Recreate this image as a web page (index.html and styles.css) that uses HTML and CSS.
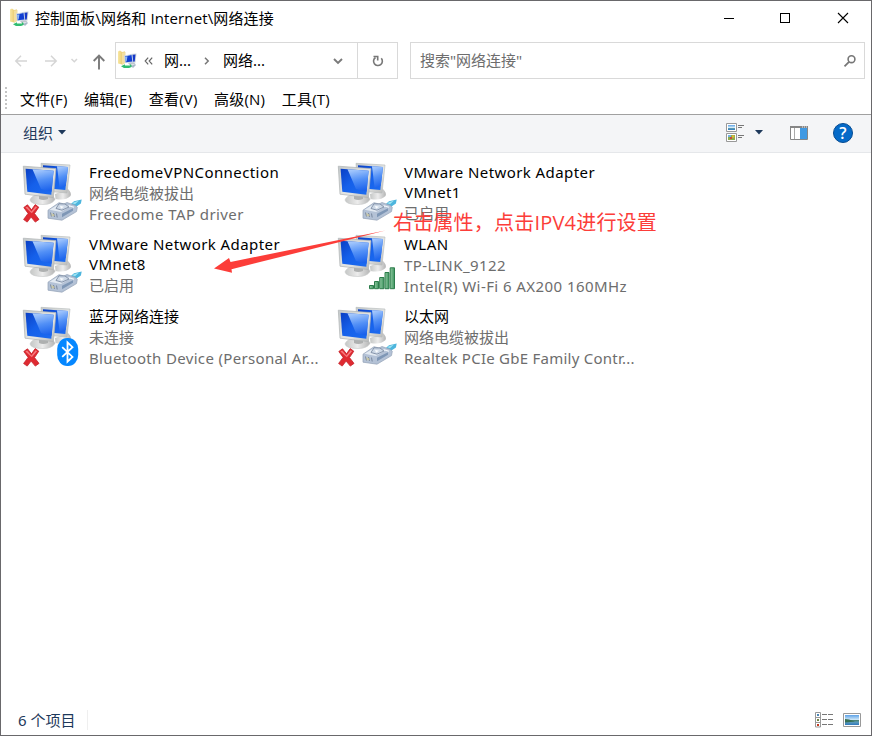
FILE: index.html
```html
<!DOCTYPE html>
<html lang="zh-CN">
<head>
<meta charset="utf-8">
<title>网络连接</title>
<link rel="stylesheet" href="styles.css">
</head>
<body>
<svg class="defs" width="0" height="0" aria-hidden="true">
  <defs>
    <linearGradient id="screen" x1="0" y1="0" x2="1" y2="1"><stop offset="0" stop-color="#0a3fc4"/><stop offset=".45" stop-color="#1560ea"/><stop offset="1" stop-color="#1d6cf0"/></linearGradient>
    <linearGradient id="shine" x1=".3" y1="0" x2=".5" y2="1"><stop offset="0" stop-color="#a9cbfd"/><stop offset=".5" stop-color="#5290f6"/><stop offset="1" stop-color="#1b62ec"/></linearGradient>
    <linearGradient id="bezel" x1="0" y1="0" x2="1" y2="1"><stop offset="0" stop-color="#c4c9ca"/><stop offset=".6" stop-color="#e6e7e5"/><stop offset="1" stop-color="#b5b6b5"/></linearGradient>
    <linearGradient id="base" x1="0" y1="0" x2="1" y2="0"><stop offset="0" stop-color="#c4c6c5"/><stop offset=".5" stop-color="#ececec"/><stop offset="1" stop-color="#b4b5b5"/></linearGradient>
    <linearGradient id="bar" x1="0" y1="0" x2="1" y2="0"><stop offset="0" stop-color="#8fc9a0"/><stop offset="1" stop-color="#3f9560"/></linearGradient>
    <linearGradient id="folder" x1="0" y1="0" x2="1" y2="0"><stop offset="0" stop-color="#f8e7a2"/><stop offset="1" stop-color="#e2bd58"/></linearGradient>
    <linearGradient id="sky" x1="0" y1="0" x2="0" y2="1"><stop offset="0" stop-color="#5da2e8"/><stop offset=".5" stop-color="#d6ecf8"/><stop offset=".52" stop-color="#47806d"/><stop offset=".72" stop-color="#5b9bb9"/><stop offset="1" stop-color="#2e77bd"/></linearGradient>
    <symbol id="monitors" viewBox="0 0 64 64">
      <path d="M35 34q6-2 13-5 4 4 2.500 7-5 5-15 3z" fill="url(#base)"/>
      <path d="M21 3.300L50 5l-3 28-24-2z" fill="url(#bezel)" stroke="#b4b8b9" stroke-width=".6"/>
      <path d="M23 5.300L48 7l-2.700 23-22-2z" fill="url(#screen)"/>
      <path d="M37 6.300l11 .7-2.400 19-6 2z" fill="url(#shine)"/>
      <path d="M10 40q1-4 9-6l8 1q8 1 8 4.500-3 5-12 5-12 0-13-4.500z" fill="url(#base)" stroke="#c6c8c8" stroke-width=".6"/>
      <path d="M19 34l9 1v4q-5 2-9 0z" fill="#aeb0b0"/>
      <path d="M3.300 6.200L36 8.600l-2.600 29L5 34.200z" fill="url(#bezel)" stroke="#adb1b3" stroke-width=".7"/>
      <path d="M5.600 8.700l28 2-2.300 24-24-3z" fill="url(#screen)"/>
      <path d="M12.500 9.200l21.100 1.500-2 21L21 29z" fill="url(#shine)"/>
    </symbol>
    <symbol id="cross" viewBox="0 0 64 64">
      <path d="M3.800 47.500l3.700-2.700 4 5 3.700-5.200 3.600 2.600-4.300 6.400 4.500 5.800-3.700 2.700-4.200-5-3.900 5-3.600-2.600 4.500-6.100z" fill="#df2a31" stroke="#c5222a" stroke-width=".8" stroke-linejoin="round"/>
      <path d="M5.400 47.400l1.800-1 4.200 5 4.200-5.200 1.500 1.100-5.300 6z" fill="#f6777b"/>
    </symbol>
    <symbol id="plug" viewBox="0 0 64 64">
      <g transform="translate(0 -.8)">
      <path d="M50 45.500l4-3.400 7.700-1.800-.8 4-5.500 3.800z" fill="#4db5dd"/>
      <path d="M52 43.800l7-2.400-4 3.600z" fill="#a0e4f3"/>
      <path d="M28 51l11-7.500 5 1.300 3-1.500 8 2.800 2.300 2-.8 4.300L42 61l-14-2z" fill="#b4c2d6" stroke="#94a2b6" stroke-width=".7" stroke-linejoin="round"/>
      <path d="M29.500 50.500l9.500-5.800 12 2-10 6z" fill="#e3eaf2"/>
      <path d="M36 49.300l3-4.700 6 .2 4 3-7 3.200z" fill="#cdd8e6" stroke="#72839b" stroke-width=".8"/>
      <path d="M40 46.500l4 1-3 2z" fill="#f8fbfd"/>
      <path d="M30.500 53.300l1 4M33.500 53.800l1 4M36.500 54.300l.7 4" stroke="#708097" stroke-width=".9"/>
      <path d="M42 54.500l11-5.500v2.500l-11 6.500z" fill="#7f97b6"/>
      <path d="M49 46.500l5 1.500" stroke="#f3f7fa" stroke-width="1.200"/>
      <path d="M31 54.500l3 1M31.500 56.500h3" stroke="#ddd18c" stroke-width=".7"/>
      </g>
    </symbol>
    <symbol id="bluetooth" viewBox="0 0 64 64">
      <rect x="37.200" y="34" width="21" height="28" rx="10" ry="11" fill="#0587ff"/>
      <path d="M42.200 43.100l10.300 9.800-5 4.800V38.300l5 4.900-10.300 9.700" fill="none" stroke="#fff" stroke-width="1.800"/>
    </symbol>
    <symbol id="signal" viewBox="0 0 64 64">
      <g fill="url(#bar)" stroke="#2c7c4b" stroke-width="1"><path d="M34.500 53.500h4v3.200h-4z"/><path d="M39.500 49.500h4v7.200h-4z"/><path d="M44.700 45.500h4.200v11.200h-4.200z"/><path d="M50 40.500h4v16.200h-4z"/><path d="M55.200 35.800h4.300v20.900h-4.300z"/></g>
    </symbol>
    <symbol id="netfolder" viewBox="0 0 20 20">
      <path d="M1 1.500l2-1 2 1.500 3-.5v11l-3 2-4-1z" fill="url(#folder)"/>
      <path d="M5 2.500l3.500-.5v11l-3.500 2z" fill="#f3dfa0"/>
      <path d="M13 4l6.500-.5-1 9-6 .5z" fill="#cad1da"/><path d="M14 5l4.500-.5-.8 7-4.200.5z" fill="#1537c8"/>
      <path d="M7 5.500L15.500 4l.8 8.500L8 13z" fill="#c8d6e8"/><path d="M8 6.500L14.500 5l.8 6.500-6.500.7z" fill="#123fd2"/><path d="M8 7l2.500-.8L9.600 11.500h-1z" fill="#94bcf3"/>
      <path d="M11 13l6-.5 1.500 1.500-6 1z" fill="#bfc6cd"/>
      <path d="M4 16.300l4-2v1.300h5V14l3 2.500-4 1.500H7z" fill="#32bd70"/>
      <path d="M14 16l4-2 1 1-3 3z" fill="#a9b8c8"/>
    </symbol>
  </defs>
</svg>

<div class="window">
  <header class="titlebar">
    <svg class="app-icon" width="20" height="20"><use href="#netfolder"/></svg>
    <span class="title">控制面板\网络和 Internet\网络连接</span>
    <div class="caption">
      <svg width="58" height="36" viewBox="0 0 58 36"><path d="M23 17.500h10" stroke="#000"/></svg>
      <svg width="58" height="36" viewBox="0 0 58 36"><rect x="21.500" y="12.500" width="9" height="9" fill="none" stroke="#000"/></svg>
      <svg width="58" height="36" viewBox="0 0 58 36"><path d="M21 12l10 10M31 12L21 22" stroke="#000" stroke-width="1.100"/></svg>
    </div>
  </header>

  <div class="navrow">
    <svg class="nav" width="114" height="37" viewBox="0 0 114 37" fill="none">
      <g stroke="#d5d5d5" stroke-width="1.500"><path d="M26 19H15M20 13.800L14.800 19l5.200 5.200"/><path d="M44 19h11M50 13.800l5.200 5.200-5.200 5.200"/><path d="M70.500 17l2.800 2.700L76 17"/></g>
      <path d="M98 27.500V14M92.700 19L98 13.700l5.300 5.300" stroke="#7a7a7a" stroke-width="1.900"/>
    </svg>
    <div class="address">
      <div class="path">
        <svg class="path-icon" width="20" height="20"><use href="#netfolder"/></svg>
        <svg class="laquo" width="10" height="10" viewBox="0 0 10 10"><path d="M4.200 1.700L1.200 5l3 3.300M8.200 1.700L5.200 5l3 3.300" fill="none" stroke="#666" stroke-width="1.200"/></svg>
        <span class="crumb first">网...</span>
        <svg class="sep" width="8" height="10" viewBox="0 0 8 10"><path d="M2 1.800L5.200 5 2 8.200" fill="none" stroke="#777" stroke-width="1.500"/></svg>
        <span class="crumb">网络...</span>
        <svg class="drop" width="12" height="10" viewBox="0 0 12 10"><path d="M2 3l4 4 4-4" fill="none" stroke="#7a7a7a" stroke-width="1.900"/></svg>
      </div>
      <div class="refresh"><svg width="14" height="14" viewBox="0 0 14 14"><path d="M10.300 4.300A4.400 4.400 0 1 1 4.500 3.500" fill="none" stroke="#777" stroke-width="1.600"/><path d="M2.500 2.500h4.200v4" fill="none" stroke="#777" stroke-width="1.600"/></svg></div>
    </div>
    <div class="search">
      <span>搜索"网络连接"</span>
      <svg width="14" height="14" viewBox="0 0 14 14"><circle cx="8.500" cy="5.200" r="3.400" fill="none" stroke="#777" stroke-width="1.600"/><path d="M6 7.800L1.500 12.300" stroke="#777" stroke-width="1.800"/></svg>
    </div>
  </div>

  <nav class="menubar">
    <i class="grip"></i>
    <span>文件(F)</span><span>编辑(E)</span><span>查看(V)</span><span>高级(N)</span><span>工具(T)</span>
  </nav>

  <div class="toolbar">
    <span class="organize">组织</span>
    <svg class="caret" width="8" height="5" viewBox="0 0 8 5"><path d="M0 0h8L4 4.400z" fill="#1e395b"/></svg>
    <div class="tools">
      <svg class="views" width="19" height="20" viewBox="0 0 19 20">
        <g fill="#fff" stroke="#999"><path d="M.5.5h10v8H.5zM.5 10.500h10v8H.5z"/></g>
        <path d="M2 2h7v5H2z" fill="url(#sky)"/><path d="M2 12h7v5H2z" fill="#8fac4e"/><path d="M2 12h3v2H2z" fill="#73b2df"/><path d="M4 14h2v2H4z" fill="#cf4934"/><path d="M6 12.500h2.300v2H6z" fill="#e2bd36"/>
        <path d="M12 2.500h6M12 4.500h4M12 12.500h6M12 14.500h4" stroke="#777"/>
      </svg>
      <svg class="caret" width="8" height="5" viewBox="0 0 8 5"><path d="M0 0h8L4 4.400z" fill="#1e395b"/></svg>
      <svg class="pane" width="18" height="14" viewBox="0 0 18 14"><path d="M.5.5h17v13H.5z" fill="#fff" stroke="#868686"/><path d="M0 0h18v2H0z" fill="#868686"/><path d="M4.500 2v11" stroke="#aaa"/><path d="M10 2h7v11h-7z" fill="#4099e2"/><path d="M12 1h1M14 1h1M16 1h1" stroke="#eee"/></svg>
      <span class="help">?</span>
    </div>
  </div>

  <main class="content">
    <div class="items">
      <article class="item"><svg width="64" height="64"><use href="#monitors"/><use href="#cross"/><use href="#plug"/></svg>
        <div class="label"><h2>FreedomeVPNConnection</h2><p>网络电缆被拔出</p><p class="wide">Freedome TAP driver</p></div></article>
      <article class="item"><svg width="64" height="64"><use href="#monitors"/><use href="#plug"/></svg>
        <div class="label"><h2>VMware Network Adapter<br>VMnet1</h2><p>已启用</p></div></article>
      <article class="item"><svg width="64" height="64"><use href="#monitors"/><use href="#plug"/></svg>
        <div class="label"><h2>VMware Network Adapter<br>VMnet8</h2><p>已启用</p></div></article>
      <article class="item"><svg width="64" height="64"><use href="#monitors"/><use href="#signal"/></svg>
        <div class="label"><h2>WLAN</h2><p class="wide">TP-LINK_9122</p><p class="wide">Intel(R) Wi-Fi 6 AX200 160MHz</p></div></article>
      <article class="item"><svg width="64" height="64"><use href="#monitors"/><use href="#cross"/><use href="#bluetooth"/></svg>
        <div class="label"><h2 class="cjk">蓝牙网络连接</h2><p>未连接</p><p class="clipped">Bluetooth Device (Personal Ar...</p></div></article>
      <article class="item"><svg width="64" height="64"><use href="#monitors"/><use href="#cross"/><use href="#plug"/></svg>
        <div class="label"><h2 class="cjk">以太网</h2><p>网络电缆被拔出</p><p class="clipped tight">Realtek PCIe GbE Family Contr...</p></div></article>
    </div>
    <svg class="arrow" width="172" height="44" viewBox="0 0 172 44"><path d="M171.500 .6L16.500 32 15 28 0 38.500 18 42.800 17.500 39.200z" fill="#fc3d39"/></svg>
    <span class="note">右击属性，点击IPV4进行设置</span>
  </main>

  <footer class="status">
    <span>6 个项目</span>
    <div class="modes">
      <svg width="18" height="16" viewBox="0 0 18 16"><path d="M.5.5h5v14.500h-5zM.5 5.500h5M.5 10.500h5" fill="#fff" stroke="#999"/><path d="M2 2h2v2H2z" fill="#4b86b5"/><path d="M2 7h2v2H2z" fill="#718543"/><path d="M2 12h2v2H2z" fill="#c33b1f"/><path d="M7 2.500h5M13 2.500h5M7 7.500h5M13 7.500h5M7 12.500h5M13 12.500h5" stroke="#777"/></svg>
      <svg width="18" height="14" viewBox="0 0 18 14"><path d="M.5.5h17v13H.5z" fill="#fff" stroke="#999"/><path d="M2 2h14v10H2z" fill="url(#sky)"/><path d="M2 6l4 .4 6 2-10 1z" fill="#377055"/></svg>
    </div>
  </footer>
</div>
</body>
</html>
```
FILE: styles.css
```css
* { box-sizing: border-box; }
body {
  margin: 0;
  font: 15px/20px "Noto Sans", "Noto Sans CJK SC", sans-serif;
  color: #000;
}
svg { display: block; flex: none; }
.defs { position: absolute; }
h2, p { margin: 0; font: inherit; white-space: nowrap; }
.window {
  width: 872px;
  height: 736px;
  border: 1px solid #69686b;
  background: #fff;
  display: flex;
  flex-direction: column;
  overflow: hidden;
}
.titlebar { height: 41px; display: flex; align-items: flex-start; padding-left: 8px; }
.app-icon { margin-top: 7px; }
.title { margin: 7px 0 0 6px; font-family: "Open Sans", "Noto Sans CJK SC", sans-serif; font-size: 15px; letter-spacing: .12px; white-space: nowrap; }
.caption { margin: 0 -4px 0 auto; display: flex; }

.navrow { height: 37px; display: flex; }
.address { width: 283px; display: flex; border: 1px solid #d9d9d9; }
.path { flex: 1; display: flex; align-items: center; padding-left: 2px; }
.path-icon { margin-top: -2px; margin-left: -1px; }
.laquo { margin-left: 7px; }
.crumb { width: 58px; margin-top: -2px; }
.crumb.first { width: 28px; margin-left: 10px; }
.sep { margin: 0 12px 0 11px; }
.drop { margin-left: auto; margin-right: 13px; }
.refresh { width: 40px; border-left: 1px solid #d9d9d9; display: flex; align-items: center; justify-content: center; }
.search {
  width: 455px;
  margin-left: 12px;
  border: 1px solid #d9d9d9;
  color: #6d6d6d;
  display: flex;
  align-items: center;
  justify-content: space-between;
  padding: 0 7px 0 9px;
}
.search span { margin-top: -2px; }

.menubar {
  height: 36px;
  border-bottom: 1px solid #a0a0a0;
  display: flex;
  padding: 10px 0 0 4px;
  gap: 16px;
  font-family: "Open Sans", "Noto Sans CJK SC", sans-serif;
  font-size: 15px;
  letter-spacing: .2px;
}
.menubar span + span { margin-left: .5px; }
.grip { width: 2px; height: 24px; margin: -2px -3px 0 0; background: repeating-linear-gradient(#c4c4c4 0 2px, #fff 2px 4px); }
.toolbar {
  height: 38px;
  background: #f4f5f7;
  border-bottom: 1px solid #e5e7ea;
  display: flex;
  align-items: center;
  padding: 0 0 2px 22px;
  color: #1e395b;
}
.organize + .caret { margin-left: 5px; }
.tools { margin-left: auto; margin-right: 18px; display: flex; align-items: center; }
.tools .caret { margin: 0 27px 0 10px; }
.tools .views { margin-left: 0; }
.help {
  width: 20px;
  height: 20px;
  margin-left: 25px;
  border: 1px solid #064b92;
  border-radius: 50%;
  background: #056ac8;
  color: #fff;
  font: 600 16px/18px "Open Sans", sans-serif;
  text-align: center;
}

.content { flex: 1; position: relative; padding: 7px 0 0 19px; }
.items { display: grid; grid-template-columns: 315px 315px; grid-auto-rows: 72px; }
.item { display: flex; gap: 5px; }
.label { padding-top: 2px; line-height: 21px; color: #6d6d6d; }
.label h2 { line-height: 20px; color: #000; letter-spacing: .42px; }
.label .cjk { letter-spacing: 0; }
.label h2 + p { padding-top: 1px; }
.wide { letter-spacing: .43px; }
.clipped { letter-spacing: .34px; }
.tight { letter-spacing: .25px; }
.arrow { position: absolute; left: 213px; top: 77px; }
.note { position: absolute; left: 392px; top: 56px; font: 20px/28px "Open Sans", "Noto Sans CJK SC", sans-serif; letter-spacing: .2px; color: #fc3d39; white-space: nowrap; }

.status { height: 32px; display: flex; align-items: center; justify-content: space-between; padding: 1px 10px 0 17px; color: #1e395b; }
.status > span { padding-right: 12px; border-right: 1px solid #efefef; }
.modes { display: flex; align-items: center; gap: 10px; }
```
